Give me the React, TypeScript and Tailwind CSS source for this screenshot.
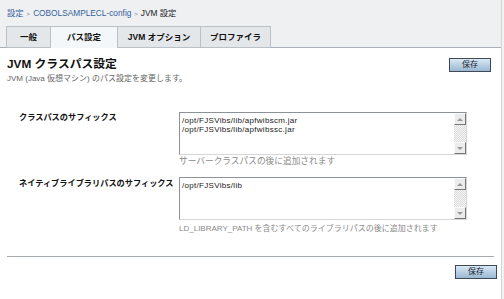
import React from "react";

const jp = "font-['Liberation_Sans','Noto_Sans_CJK_JP',sans-serif]";

const SaveButton = () => (
  <button className="w-[42px] h-[14px] border border-[#3f4a55] bg-gradient-to-b from-[#d9e8f4] to-[#9ab8d2] text-[8px] leading-none text-[#1b2631] flex items-center justify-center">
    保存
  </button>
);

const ScrollBox = ({ lines }: { lines: string[] }) => (
  <div className="w-[288px] h-[43px] border border-[#8d9296] border-r-[#d6d6d6] border-b-[#d6d6d6] bg-white flex">
    <div className="flex-1 pl-[2px] pt-[3px] text-[8px] tracking-[0.3px] leading-[9px] text-[#222]">
      {lines.map((l) => (
        <div key={l}>{l}</div>
      ))}
    </div>
    <div className="w-[12px] flex flex-col bg-[#ebebeb]">
      <div className="h-[12px] bg-[#ececec] border border-[#fafafa] border-r-[#777] border-b-[#777] flex items-center justify-center">
        <div className="w-0 h-0 border-l-[3px] border-r-[3px] border-b-[3px] border-l-transparent border-r-transparent border-b-[#999]" />
      </div>
      <div className="flex-1 bg-[repeating-conic-gradient(#f4f4f4_0_25%,#dcdcdc_0_50%)] bg-[length:2px_2px]" />
      <div className="h-[12px] bg-[#ececec] border border-[#fafafa] border-r-[#777] border-b-[#777] flex items-center justify-center">
        <div className="w-0 h-0 border-l-[3px] border-r-[3px] border-t-[3px] border-l-transparent border-r-transparent border-t-[#999]" />
      </div>
    </div>
  </div>
);

const tabs = [
  { label: "一般", w: "w-[44px]" },
  { label: "パス設定", w: "w-[67px]", active: true },
  { label: "JVM オプション", w: "w-[83px]" },
  { label: "プロファイラ", w: "w-[71px]" },
];

export default function App() {
  return (
    <div className={`w-[504px] h-[299px] bg-white flex overflow-hidden ${jp}`}>
      <div className="flex-1 flex flex-col">
        <div className="bg-[#eef0f2] pt-[8px]">
          <div className="px-[7px] h-[11px] flex items-center gap-[3px] text-[8.3px] leading-none">
            <span className="text-[#35609b]">設定</span>
            <span className="text-[#777] text-[6px]">&gt;</span>
            <span className="text-[#35609b]">COBOLSAMPLECL-config</span>
            <span className="text-[#777] text-[6px]">&gt;</span>
            <span className="text-[#222]">JVM 設定</span>
          </div>
          <div className="mt-[7px] pl-[6px] flex border-b border-[#a9b0b7] h-[22px]">
            {tabs.map((t) => (
              <div
                key={t.label}
                className={`${t.w} h-[22px] flex items-center justify-center text-[8.5px] font-bold text-[#111] border border-[#b9c0c6] border-r-0 last:border-r ${
                  t.active ? "bg-[#f4f7fa] -mb-px border-b-0" : "bg-[#e4e7ea]"
                }`}
              >
                {t.label}
              </div>
            ))}
          </div>
        </div>

        <div className="px-[7px] pt-[9px] flex justify-between">
          <div>
            <h1 className="text-[11.8px] font-bold leading-[14px] text-[#111]">JVM クラスパス設定</h1>
            <p className="mt-[3px] text-[8px] leading-[9px] text-[#666]">
              JVM (Java 仮想マシン) のパス設定を変更します。
            </p>
          </div>
          <div className="pt-[1px] pr-[3px]">
            <SaveButton />
          </div>
        </div>

        <div className="mt-[29px] pl-[19px] flex flex-col gap-[10px]">
          <div className="flex">
            <div className="w-[160px] pt-[1px] text-[8.2px] font-bold leading-[10px] text-[#111] whitespace-nowrap">
              クラスパスのサフィックス
            </div>
            <div>
              <ScrollBox lines={["/opt/FJSVibs/lib/apfwibscm.jar", "/opt/FJSVibs/lib/apfwibssc.jar"]} />
              <div className="mt-[1px] text-[8.7px] leading-[11px] text-[#8a8a8a]">サーバークラスパスの後に追加されます</div>
            </div>
          </div>
          <div className="flex">
            <div className="w-[160px] pt-[2px] text-[8.2px] font-bold leading-[10px] text-[#111] whitespace-nowrap">
              ネイティブライブラリパスのサフィックス
            </div>
            <div>
              <ScrollBox lines={["/opt/FJSVibs/lib"]} />
              <div className="mt-[3px] text-[8px] leading-[11px] text-[#8a8a8a]">
                LD_LIBRARY_PATH を含むすべてのライブラリパスの後に追加されます
              </div>
            </div>
          </div>
        </div>

        <div className="mx-[7px] mt-[22px] border-t border-[#a6abb0]" />
        <div className="pr-[4px] pt-[8px] flex justify-end">
          <SaveButton />
        </div>
      </div>
      <div className="w-[3px] border-l border-[#d4d4d4] bg-[#f2f2f2]" />
    </div>
  );
}
